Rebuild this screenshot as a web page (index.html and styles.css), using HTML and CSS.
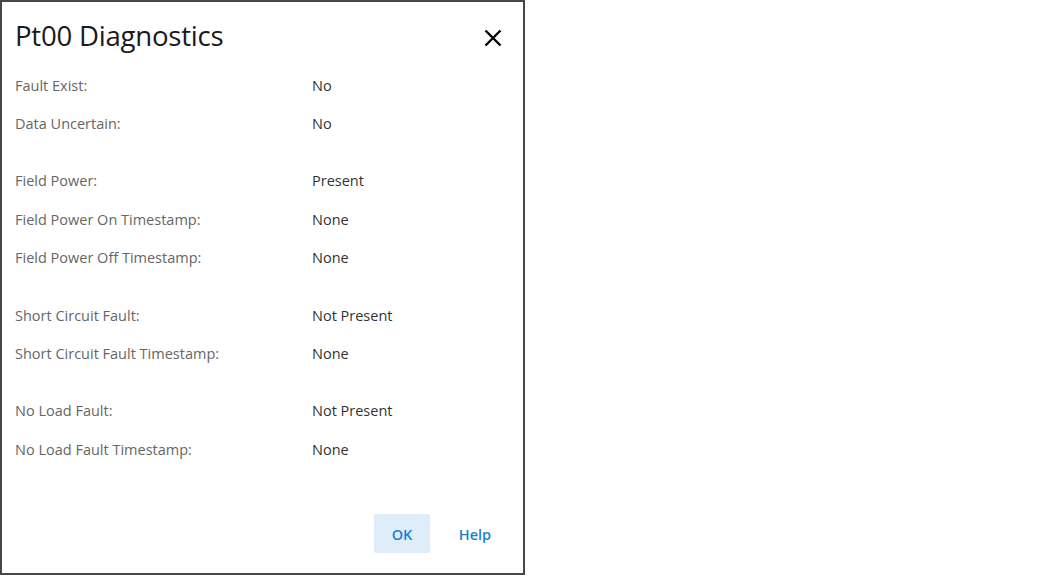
FILE: index.html
```html
<!DOCTYPE html>
<html>
<head>
<meta charset="utf-8">
<link rel="stylesheet" href="styles.css">
</head>
<body>
<div class="dialog">
  <div class="header">
    <h1 class="title">Pt00 Diagnostics</h1>
    <button class="close" aria-label="Close">
      <svg width="18" height="18" viewBox="0 0 18 18"><path d="M1.5 1.5 L16.5 16.5 M16.5 1.5 L1.5 16.5" stroke="#000" stroke-width="2.4" fill="none"/></svg>
    </button>
  </div>
  <div class="body">
    <div class="group">
      <div class="row"><span class="label">Fault Exist:</span><span class="value">No</span></div>
      <div class="row"><span class="label">Data Uncertain:</span><span class="value">No</span></div>
    </div>
    <div class="group">
      <div class="row"><span class="label">Field Power:</span><span class="value">Present</span></div>
      <div class="row"><span class="label">Field Power On Timestamp:</span><span class="value">None</span></div>
      <div class="row"><span class="label">Field Power Off Timestamp:</span><span class="value">None</span></div>
    </div>
    <div class="group">
      <div class="row"><span class="label">Short Circuit Fault:</span><span class="value">Not Present</span></div>
      <div class="row"><span class="label">Short Circuit Fault Timestamp:</span><span class="value">None</span></div>
    </div>
    <div class="group">
      <div class="row"><span class="label">No Load Fault:</span><span class="value">Not Present</span></div>
      <div class="row"><span class="label">No Load Fault Timestamp:</span><span class="value">None</span></div>
    </div>
  </div>
  <div class="footer">
    <button class="btn btn-primary">OK</button>
    <button class="btn btn-link">Help</button>
  </div>
</div>
</body>
</html>
```
FILE: styles.css
```css
html, body {
  margin: 0;
  padding: 0;
  background: #fff;
}
body {
  font-family: "Open Sans", "Noto Sans", sans-serif;
}
.dialog {
  box-sizing: border-box;
  width: 525px;
  height: 575px;
  border: 2px solid #474747;
  background: #fff;
  display: flex;
  flex-direction: column;
}
.header {
  display: flex;
  align-items: center;
  justify-content: space-between;
  padding: 13px 21px 0 13px;
  height: 40px;
}
.title {
  margin: 0;
  font-size: 27.6px;
  font-weight: 400;
  color: #1a1a1a;
  letter-spacing: -0.25px;
  line-height: 40px;
}
.close {
  border: 0;
  background: none;
  padding: 0;
  margin-top: 5px;
  width: 18px;
  height: 18px;
  display: flex;
}
.body {
  padding: 11px 0 0 13px;
  display: flex;
  flex-direction: column;
  gap: 19px;
  flex: 1;
}
.group {
  display: flex;
  flex-direction: column;
}
.row {
  display: flex;
  height: 38.4px;
  align-items: center;
  font-size: 14.5px;
}
.label {
  width: 297px;
  color: #666;
}
.value {
  color: #333;
}
.footer {
  display: flex;
  justify-content: flex-end;
  align-items: center;
  gap: 17px;
  padding: 0 20px 20px 0;
}
.btn {
  border: 0;
  font-family: "Open Sans", "Noto Sans", sans-serif;
  font-size: 14.5px;
  font-weight: 600;
  color: #1b7fd3;
  height: 39px;
  padding-top: 3px;
  border-radius: 2px;
  cursor: pointer;
}
.btn-primary {
  width: 56px;
  background: #deedf9;
}
.btn-link {
  background: none;
  width: 56px;
}
```
